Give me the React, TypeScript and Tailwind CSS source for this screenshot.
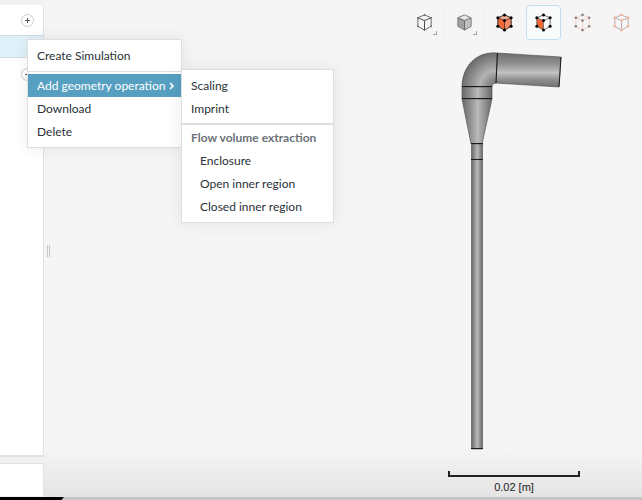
import type { ReactNode } from 'react';

interface CubeIconProps {
  edge: string;
  inner?: string;
  top?: string;
  left?: string;
  right?: string;
  node?: string;
  nodeSize?: number;
}

const NODES = [
  [10, 2],
  [17, 5],
  [17, 14],
  [10, 18],
  [3, 14],
  [3, 5],
  [10, 8],
];

const CubeIcon = ({
  edge,
  inner = edge,
  top = 'none',
  left = 'none',
  right = 'none',
  node,
  nodeSize = 1.3,
}: CubeIconProps) => (
  <svg viewBox="0 0 20 20" className="size-[19px]" aria-hidden="true">
    <path d="M10 2 17 5 10 8 3 5Z" fill={top} />
    <path d="M3 5 10 8V18L3 14Z" fill={left} />
    <path d="M17 5 10 8V18L17 14Z" fill={right} />
    <path d="M3 5 10 8 17 5M10 8V18" fill="none" stroke={inner} />
    <path d="M10 2 17 5V14L10 18 3 14V5Z" fill="none" stroke={edge} strokeLinejoin="round" />
    {node ? NODES.map(([cx, cy]) => <circle key={`${cx}-${cy}`} cx={cx} cy={cy} r={nodeSize} fill={node} />) : null}
  </svg>
);

interface ToolButtonProps {
  label: string;
  active?: boolean;
  hasMenu?: boolean;
  children: ReactNode;
}

const ToolButton = ({ label, active, hasMenu, children }: ToolButtonProps) => (
  <button
    type="button"
    aria-label={label}
    aria-pressed={active}
    className={`relative flex size-[35px] items-center justify-center rounded border ${
      active ? 'border-[#bfe0f0] bg-[#f9fbfb]' : 'border-transparent'
    }`}
  >
    {children}
    {hasMenu ? <span className="absolute right-1 bottom-1 size-1 border-r border-b border-[#a0a0a0]" /> : null}
  </button>
);

const Divider = () => <span className="mx-0.5 h-[35px] w-px bg-[#ececec]" />;

const Toolbar = () => (
  <div className="flex h-[45px] items-center justify-end pr-[3px]">
    <div className="flex items-center">
      <ToolButton label="Wireframe" hasMenu>
        <CubeIcon edge="#666" inner="#444" node="#666" nodeSize={0.9} />
      </ToolButton>
      <Divider />
      <ToolButton label="Shaded" hasMenu>
        <CubeIcon edge="#777" inner="#666" top="#e6e6e6" left="#a2a2a2" right="#c0c0c0" />
      </ToolButton>
      <Divider />
    </div>
    <div className="flex items-center gap-1">
      <ToolButton label="Select volumes">
        <CubeIcon
          edge="#222"
          inner="#6b3019"
          top="#f5b199"
          left="#f26a3a"
          right="#f58a62"
          node="#000"
          nodeSize={1.6}
        />
      </ToolButton>
      <ToolButton label="Select faces" active>
        <CubeIcon edge="#666" inner="#777" left="#f26430" node="#000" nodeSize={1.6} />
      </ToolButton>
      <ToolButton label="Select vertices">
        <CubeIcon edge="#f5cdbd" node="#8a8583" nodeSize={1.4} />
      </ToolButton>
      <ToolButton label="Select edges">
        <CubeIcon edge="#b3aaa6" node="#f5b9a3" nodeSize={1.5} />
      </ToolButton>
    </div>
  </div>
);

const PipeModel = () => (
  <svg viewBox="448 45 132 410" className="h-[410px] w-full" role="img" aria-label="Pipe geometry">
    <defs>
      <linearGradient id="vertical">
        <stop offset="0" stopColor="#6b6b6b" />
        <stop offset="0.25" stopColor="#8c8c8c" />
        <stop offset="0.52" stopColor="#bababa" />
        <stop offset="0.8" stopColor="#8c8c8c" />
        <stop offset="1" stopColor="#666" />
      </linearGradient>
      <linearGradient id="horizontal" x1="0" y1="0" x2="0" y2="1">
        <stop offset="0" stopColor="#6e6e6e" />
        <stop offset="0.3" stopColor="#8e8e8e" />
        <stop offset="0.58" stopColor="#c2c2c2" />
        <stop offset="0.8" stopColor="#8c8c8c" />
        <stop offset="1" stopColor="#707070" />
      </linearGradient>
      <radialGradient id="bend" gradientUnits="userSpaceOnUse" cx="496" cy="87" r="34">
        <stop offset="0" stopColor="#707070" />
        <stop offset="0.2" stopColor="#858585" />
        <stop offset="0.48" stopColor="#b4b4b4" />
        <stop offset="0.75" stopColor="#8e8e8e" />
        <stop offset="1" stopColor="#6e6e6e" />
      </radialGradient>
    </defs>
    <g stroke="#4a4a4a" strokeWidth="0.6">
      <path d="M497 53 561 57 559 87 495 83Z" fill="url(#horizontal)" />
      <path d="M462 87C462 66 477 51 497 53L496 83Q492 83 492 87Z" fill="url(#bend)" />
      <path d="M462 87H492V99H462Z" fill="url(#vertical)" />
      <path d="M462 99H492L482 144H471Z" fill="url(#vertical)" />
      <path d="M471.500 144H482.500V449H471.500Z" fill="url(#vertical)" />
    </g>
    <path
      d="M497.500 53 496 83M561 57 559 87M462 86.500H492M462 98.500H492M471 143.500H483M471 159.500H483M471 448.500H483"
      fill="none"
      stroke="#1c1c1c"
    />
  </svg>
);

const ScaleBar = () => (
  <div className="mt-4 w-full text-center font-['Liberation_Sans',Arial,sans-serif] text-[11px] leading-4 text-[#222]">
    <div className="mb-0.5 h-1.5 border-x-2 border-b-2 border-[#222]" />
    0.02 [m]
  </div>
);

const AddButton = ({ label }: { label: string }) => (
  <button
    type="button"
    aria-label={label}
    className="flex size-[13px] items-center justify-center rounded-full border border-[#c9ccce] bg-white"
  >
    <svg viewBox="0 0 5 5" className="size-[5px]" aria-hidden="true">
      <path d="M2.500 0V5M0 2.500H5" stroke="#555b61" />
    </svg>
  </button>
);

const Sidebar = () => (
  <aside className="flex w-11 shrink-0 flex-col gap-1.5 bg-[#f1f1f1] pt-[5px] pb-px">
    <div className="flex-1 border-r border-b-2 border-[#e0e2e3] bg-white">
      <div className="flex h-[30px] items-center justify-end pr-[9px]">
        <AddButton label="Add geometry" />
      </div>
      <div className="h-[23px] border-y border-[#d3dce1] bg-[#e1f1f9]" />
      <div className="flex h-8 items-center justify-end pr-[9px]">
        <AddButton label="Add simulation" />
      </div>
    </div>
    <div className="h-[33px] border-t border-r border-[#e0e2e3] bg-white" />
  </aside>
);

const MenuItem = ({ label, indent }: { label: string; indent?: boolean }) => (
  <button
    type="button"
    role="menuitem"
    className={`flex h-[23px] w-full items-center pr-2 text-left ${indent ? 'pl-[18px]' : 'pl-[9px]'}`}
  >
    {label}
  </button>
);

const OperationMenu = () => (
  <div
    role="menu"
    aria-label="Add geometry operation"
    className="absolute -top-[5px] left-full w-[153px] border border-[#dcdedf] bg-white py-1 shadow-[0_0_16px_rgba(0,0,0,0.08)]"
  >
    <MenuItem label="Scaling" />
    <MenuItem label="Imprint" />
    <div role="separator" className="mt-[3px] mb-px h-0.5 bg-[#dcdedf]" />
    <div className="flex h-[23px] items-center pl-[9px] font-bold text-[#6a7278]">Flow volume extraction</div>
    <MenuItem label="Enclosure" indent />
    <MenuItem label="Open inner region" indent />
    <MenuItem label="Closed inner region" indent />
  </div>
);

const ContextMenu = () => (
  <div
    role="menu"
    aria-label="Geometry"
    className="absolute top-[39px] left-[27px] w-[155px] border border-[#dcdedf] bg-white py-1 shadow-[0_0_16px_rgba(0,0,0,0.08)]"
  >
    <MenuItem label="Create Simulation" />
    <div role="separator" className="mt-1 mb-0.5 h-px bg-[#dcdedf]" />
    <div className="relative">
      <button
        type="button"
        role="menuitem"
        aria-haspopup="menu"
        aria-expanded="true"
        className="flex h-[23px] w-full items-center justify-between bg-[#569fc1] pr-[7px] pl-[9px] whitespace-nowrap text-white"
      >
        Add geometry operation
        <svg viewBox="0 0 5 8" className="h-2 w-[5px]" aria-hidden="true">
          <path d="M1 1 4 4 1 7" fill="none" stroke="currentColor" strokeWidth="1.600" />
        </svg>
      </button>
      <OperationMenu />
    </div>
    <MenuItem label="Download" />
    <MenuItem label="Delete" />
  </div>
);

const App = () => (
  <div className="relative flex h-screen flex-col overflow-hidden font-[Lato,sans-serif] text-xs leading-4 text-[#2b3138]">
    <div className="flex min-h-0 flex-1 bg-linear-to-b from-[#f5f5f5] from-90% to-[#e4e4e4]">
      <Sidebar />
      <div className="flex w-2 items-center justify-center pt-1">
        <span className="h-3 w-[3px] border-x border-[#c5cacd]" />
      </div>
      <main className="flex-1">
        <Toolbar />
        <div className="mr-[62px] ml-auto w-[132px]">
          <PipeModel />
          <ScaleBar />
        </div>
      </main>
    </div>
    <div className="flex h-[3px] bg-[#c6c6c6]">
      <span className="w-16 bg-black [clip-path:polygon(0_0,100%_0,96%_100%,0_100%)]" />
    </div>
    <ContextMenu />
  </div>
);

export default App;
